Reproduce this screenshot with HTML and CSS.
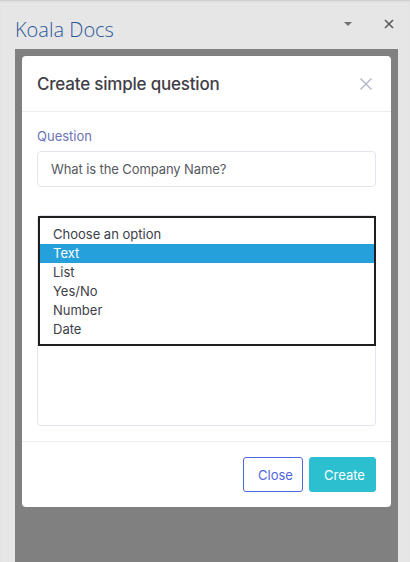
FILE: index.html
```html
<!DOCTYPE html>
<html lang="en">
<head>
    <meta charset="UTF-8">
    <meta name="viewport" content="width=device-width, initial-scale=1.0">
    <title>Koala Docs</title>
    <link rel="stylesheet" href="styles.css">
</head>
<body>

<div class="pane-header">
    <h1 class="pane-title">Koala Docs</h1>
    <div class="pane-actions">
        <span class="pane-menu"></span>
        <svg class="pane-close" width="10" height="10" viewBox="0 0 10 10">
            <path d="M1 1 L9 9 M9 1 L1 9" stroke="#5a5a5a" stroke-width="1.6" fill="none"/>
        </svg>
    </div>
</div>

<div class="overlay">
    <div class="modal">
        <div class="modal-header">
            <h2 class="modal-title">Create simple question</h2>
            <svg class="modal-close" width="12" height="12" viewBox="0 0 12 12">
                <path d="M0.5 0.5 L11.5 11.5 M11.5 0.5 L0.5 11.5" stroke="#b3b5c6" stroke-width="1.4" fill="none"/>
            </svg>
        </div>

        <div class="modal-body">
            <label class="field-label">Question</label>
            <div class="text-input">What is the Company Name?</div>

            <div class="type-field">
                <!-- open listbox of the select, drawn over the field -->
                <ul class="listbox">
                    <li>Choose an option</li>
                    <li class="selected">Text</li>
                    <li>List</li>
                    <li>Yes/No</li>
                    <li>Number</li>
                    <li>Date</li>
                </ul>
            </div>
        </div>

        <div class="modal-footer">
            <button class="btn btn-outline">Close</button>
            <button class="btn btn-info">Create</button>
        </div>
    </div>
</div>

</body>
</html>
```

FILE: styles.css
```css
* {
    box-sizing: border-box;
    margin: 0;
    padding: 0;
}

body {
    font-family: Inter, 'Noto Sans', sans-serif;
    background-color: #e6e6e6;
    height: 562px;
    overflow: hidden;
    box-shadow: inset 0 2px 2px -1px #c8c8c8;
    display: flex;
    flex-direction: column;
}

.pane-header {
    height: 49px;
    padding: 0 16px 0 15px;
    display: flex;
    align-items: center;
    justify-content: space-between;
}

.pane-title {
    font-family: 'Open Sans', sans-serif;
    font-weight: 300;
    font-size: 20px;
    color: #2b579a;
    margin-top: 10px;
}

.pane-actions {
    display: flex;
    align-items: center;
    gap: 32px;
    margin-top: -1px;
}

.pane-menu {
    width: 0;
    height: 0;
    border-left: 4.5px solid transparent;
    border-right: 4.5px solid transparent;
    border-top: 4px solid #707070;
}

.overlay {
    flex: 1;
    margin: 0 12px 0 15px;
    background-color: #808080;
    padding: 7px;
}

.modal {
    background-color: #fff;
    border-radius: 4px;
}

.modal-header {
    height: 56px;
    padding: 0 19px 0 15px;
    display: flex;
    align-items: center;
    justify-content: space-between;
    border-bottom: 1px solid #ebedf2;
}

.modal-title {
    font-size: 17px;
    font-weight: 500;
    letter-spacing: -0.2px;
    color: #3f4047;
}

.modal-body {
    padding: 15px;
}

.field-label {
    display: block;
    font-size: 13px;
    line-height: 19px;
    color: #6a73b3;
    margin-bottom: 5px;
}

.text-input {
    height: 36px;
    border: 1px solid #e2e5ec;
    border-radius: 4px;
    padding: 0 13px;
    font-size: 13px;
    line-height: 34px;
    letter-spacing: -0.1px;
    color: #575962;
}

.type-field {
    position: relative;
    margin-top: 28px;
    height: 211px;
    border: 1px solid #e2e5ec;
    border-radius: 4px;
}

.listbox {
    position: absolute;
    top: 0;
    left: 0;
    right: -1px;
    list-style: none;
    background-color: #fff;
    border: 2px solid #1e1e1e;
    padding: 7px 0 5px;
}

.listbox li {
    height: 19px;
    line-height: 19px;
    padding-left: 13px;
    font-size: 13px;
    color: #3d3e4a;
}

.listbox li.selected {
    background-color: #26a0da;
    color: #fff;
}

.modal-footer {
    border-top: 1px solid #ebedf2;
    padding: 15px;
    display: flex;
    justify-content: flex-end;
    gap: 6px;
}

.btn {
    height: 35px;
    padding: 0 14px;
    font-family: Inter, sans-serif;
    font-size: 13px;
    border-radius: 3px;
    cursor: pointer;
}

.btn-outline {
    width: 60px;
    background-color: #fff;
    border: 1px solid #4f67dd;
    color: #4f67dd;
}

.btn-info {
    width: 67px;
    background-color: #2cbfd0;
    border: 1px solid #2cbfd0;
    color: #fff;
}
```
